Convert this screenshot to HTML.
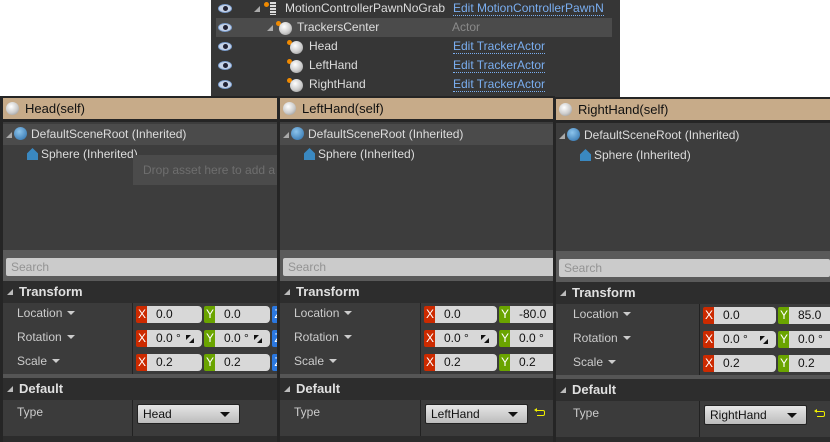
<!DOCTYPE html>
<html><head><meta charset="utf-8"><style>
*{box-sizing:border-box;margin:0;padding:0}
body{width:830px;height:442px;overflow:hidden;background:#fff;position:relative;font-family:"Liberation Sans",sans-serif;font-size:12px;color:#ddd}
.abs{position:absolute}
.top{left:211px;top:0;width:409px;height:97px;background:#363636}
.trow{position:absolute;left:5px;width:396px;height:19px;line-height:19px}
.eye{position:absolute;left:2px;top:5px;width:14px;height:9px;border-radius:50%;background:#c8d4e8;border:1px solid #7ea0d0}
.eye:after{content:"";position:absolute;left:4px;top:1px;width:5px;height:5px;border-radius:50%;background:#223}
.ball{position:absolute;width:13px;height:13px;border-radius:50%;background:radial-gradient(circle at 40% 35%,#fff,#ccc 55%,#888)}
.dot{position:absolute;width:5px;height:5px;border-radius:50%;background:#f08a00}
.link{position:absolute;left:242px;color:#7aaef0;border-bottom:1px dotted #7aaef0;line-height:14px;top:2px}
.panel{position:absolute;background:#252525;overflow:hidden}
.hdr{position:absolute;left:3px;right:0;top:2px;height:21px;background:#c7ab89;color:#111;font-size:13px;line-height:21px;padding-left:22px}
.hdr .ball{left:3px;top:4px}
.tree{position:absolute;left:3px;right:0;top:26px;height:128px;background:#3d3d3d}
.sel{position:absolute;left:0;right:0;top:2px;height:21px;background:#4b4b4b;line-height:21px;padding-left:28px}
.sph{position:absolute;top:22px;left:38px;line-height:20px}
.tri{position:absolute;width:0;height:0;border-left:6px solid transparent;border-bottom:6px solid #aaa}
.sstrip{position:absolute;left:3px;right:0;top:154px;height:31px;background:#5a5a5a}
.sbox{position:absolute;left:3px;right:0;top:8px;height:18px;background:#cbcbcb;border-radius:2px;color:#939393;line-height:18px;padding-left:5px}
.sh{position:absolute;left:3px;right:0;height:22px;background:#2d2d2d;font-weight:bold;font-size:13px;line-height:22px;padding-left:16px;color:#e0e0e0}
.sh .tri{left:4px;top:8px;border-bottom-color:#bbb}
.body{position:absolute;left:3px;right:0;background:#3b3b3b}
.lbl{position:absolute;color:#ccc;line-height:17px}
.lbl i{display:inline-block;width:0;height:0;border-left:4px solid transparent;border-right:4px solid transparent;border-top:4px solid #ccc;margin-left:5px;vertical-align:2px}
.vd{position:absolute;width:1px;background:#222}
.f{position:absolute;height:17px;width:66px}
.f b{position:absolute;left:0;top:0;width:12px;height:17px;color:#fff;font-weight:normal;line-height:17px;text-align:center;border-radius:2px 0 0 2px}
.f span{position:absolute;left:11px;top:0;right:0;height:17px;background:#d8d8d8;border-radius:0 4px 4px 0;color:#111;line-height:17px;padding-left:9px}
.rx{background:#cc2a00}.gy{background:#6aa400}.bz{background:#2b78e0}
.sp{position:absolute;right:8px;top:5px;width:8px;height:8px}
.sp:before{content:"";position:absolute;left:0;top:0;border-top:5px solid #111;border-right:5px solid transparent}
.sp:after{content:"";position:absolute;right:0;bottom:0;border-bottom:5px solid #111;border-left:5px solid transparent}
.dd{position:absolute;height:20px;width:103px;background:linear-gradient(#e6e6e6,#bcbcbc);border:1px solid #222;border-radius:2px;color:#111;line-height:18px;padding-left:5px}
.dd:after{content:"";position:absolute;right:9px;top:7px;border-left:5px solid transparent;border-right:5px solid transparent;border-top:5px solid #111}
.rst{position:absolute;width:8px;height:6px;border:1.5px solid #ee0;border-left:none;border-radius:0 2px 2px 0}
.rst:before{content:"";position:absolute;left:-3px;top:-3px;border-right:3px solid #ee0;border-top:2px solid transparent;border-bottom:2px solid transparent}
.btm{position:absolute;left:3px;right:0;height:6px;background:#2c2c2c}
</style></head><body>

<div class="abs top">
  <div class="trow" style="top:-1px"><div class="eye"></div><div class="tri" style="left:38px;top:7px"></div>
    <div class="dot" style="left:48px;top:3px"></div><div class="abs" style="left:54px;top:3px;width:6px;height:13px;background:repeating-linear-gradient(#ddd 0 2px,#444 2px 3px)"></div>
    <span class="abs" style="left:69px">MotionControllerPawnNoGrab</span><span class="link" style="left:237px">Edit MotionControllerPawnN</span></div>
  <div class="trow" style="top:18px;background:#4b4b4b"><div class="eye"></div><div class="tri" style="left:51px;top:7px"></div>
    <div class="dot" style="left:60px;top:3px"></div><div class="ball" style="left:63px;top:4px"></div>
    <span class="abs" style="left:81px">TrackersCenter</span><span class="abs" style="left:236px;color:#8a8a8a">Actor</span></div>
  <div class="trow" style="top:37px"><div class="eye"></div><div class="dot" style="left:71px;top:3px"></div><div class="ball" style="left:74px;top:4px"></div>
    <span class="abs" style="left:93px">Head</span><span class="link" style="left:237px">Edit TrackerActor</span></div>
  <div class="trow" style="top:56px"><div class="eye"></div><div class="dot" style="left:71px;top:3px"></div><div class="ball" style="left:74px;top:4px"></div>
    <span class="abs" style="left:93px">LeftHand</span><span class="link" style="left:237px">Edit TrackerActor</span></div>
  <div class="trow" style="top:75px"><div class="eye"></div><div class="dot" style="left:71px;top:3px"></div><div class="ball" style="left:74px;top:4px"></div>
    <span class="abs" style="left:93px">RightHand</span><span class="link" style="left:237px">Edit TrackerActor</span></div>
</div>

<!-- PANEL 1 -->
<div class="panel" style="left:0;top:96px;width:278px;height:346px">
  <div class="hdr"><div class="ball"></div>Head(self)</div>
  <div class="tree">
    <div class="sel"><div class="tri" style="left:3px;top:8px"></div><div class="ball" style="left:11px;top:3px;width:13px;height:13px;background:radial-gradient(circle at 40% 35%,#8cc4ec,#2a6ca8)"></div>DefaultSceneRoot (Inherited)</div>
    <div class="sph"><div class="abs" style="left:-14px;top:4px;width:11px;height:12px;background:#3a88c0;clip-path:polygon(50% 0,100% 45%,100% 100%,0 100%,0 45%)"></div>Sphere (Inherited)</div>
    <div class="abs" style="left:130px;top:33px;width:150px;height:30px;background:#4b4b4b;color:#6e6e6e;line-height:30px;padding-left:10px;white-space:nowrap">Drop asset here to add a co</div>
  </div>
  <div class="sstrip"><div class="sbox">Search</div></div>
  <div class="sh" style="top:185px"><div class="tri"></div>Transform</div>
  <div class="body" style="top:207px;height:71px">
    <div class="vd" style="left:129px;top:0;height:71px"></div>
    <div class="lbl" style="left:14px;top:2px">Location<i></i></div>
    <div class="lbl" style="left:14px;top:26px">Rotation<i></i></div>
    <div class="lbl" style="left:14px;top:50px">Scale<i></i></div>
    <div class="f" style="left:133px;top:3px"><b class="rx">X</b><span>0.0</span></div>
    <div class="f" style="left:201px;top:3px"><b class="gy">Y</b><span>0.0</span></div>
    <div class="f" style="left:269px;top:3px"><b class="bz">Z</b><span></span></div>
    <div class="f" style="left:133px;top:27px"><b class="rx">X</b><span>0.0 °<i class="sp"></i></span></div>
    <div class="f" style="left:201px;top:27px"><b class="gy">Y</b><span>0.0 °<i class="sp"></i></span></div>
    <div class="f" style="left:269px;top:27px"><b class="bz">Z</b><span></span></div>
    <div class="f" style="left:133px;top:51px"><b class="rx">X</b><span>0.2</span></div>
    <div class="f" style="left:201px;top:51px"><b class="gy">Y</b><span>0.2</span></div>
    <div class="f" style="left:269px;top:51px"><b class="bz">Z</b><span></span></div>
  </div>
  <div class="abs" style="left:3px;right:0;top:278px;height:4px;background:#555"></div>
  <div class="sh" style="top:282px"><div class="tri"></div>Default</div>
  <div class="body" style="top:304px;height:36px">
    <div class="vd" style="left:129px;top:0;height:36px"></div>
    <div class="lbl" style="left:14px;top:4px">Type</div>
    <div class="dd" style="left:134px;top:4px">Head</div>
  </div>
  <div class="btm" style="top:340px"></div>
</div>

<!-- PANEL 2 -->
<div class="panel" style="left:277px;top:96px;width:278px;height:346px">
  <div class="hdr"><div class="ball"></div>LeftHand(self)</div>
  <div class="tree">
    <div class="sel"><div class="tri" style="left:3px;top:8px"></div><div class="ball" style="left:11px;top:3px;background:radial-gradient(circle at 40% 35%,#8cc4ec,#2a6ca8)"></div>DefaultSceneRoot (Inherited)</div>
    <div class="sph"><div class="abs" style="left:-14px;top:4px;width:11px;height:12px;background:#3a88c0;clip-path:polygon(50% 0,100% 45%,100% 100%,0 100%,0 45%)"></div>Sphere (Inherited)</div>
  </div>
  <div class="sstrip"><div class="sbox">Search</div></div>
  <div class="sh" style="top:185px"><div class="tri"></div>Transform</div>
  <div class="body" style="top:207px;height:71px">
    <div class="vd" style="left:140px;top:0;height:71px"></div>
    <div class="lbl" style="left:14px;top:2px">Location<i></i></div>
    <div class="lbl" style="left:14px;top:26px">Rotation<i></i></div>
    <div class="lbl" style="left:14px;top:50px">Scale<i></i></div>
    <div class="f" style="left:144px;top:3px;width:73px"><b class="rx">X</b><span>0.0</span></div>
    <div class="f" style="left:219px;top:3px;width:73px"><b class="gy">Y</b><span>-80.0</span></div>
    <div class="f" style="left:144px;top:27px;width:73px"><b class="rx">X</b><span>0.0 °<i class="sp"></i></span></div>
    <div class="f" style="left:219px;top:27px;width:73px"><b class="gy">Y</b><span>0.0 °</span></div>
    <div class="f" style="left:144px;top:51px;width:73px"><b class="rx">X</b><span>0.2</span></div>
    <div class="f" style="left:219px;top:51px;width:73px"><b class="gy">Y</b><span>0.2</span></div>
  </div>
  <div class="abs" style="left:3px;right:0;top:278px;height:4px;background:#555"></div>
  <div class="sh" style="top:282px"><div class="tri"></div>Default</div>
  <div class="body" style="top:304px;height:36px">
    <div class="vd" style="left:140px;top:0;height:36px"></div>
    <div class="lbl" style="left:14px;top:4px">Type</div>
    <div class="dd" style="left:145px;top:4px">LeftHand</div>
    <div class="rst" style="left:257px;top:10px"></div>
  </div>
  <div class="btm" style="top:340px"></div>
</div>

<!-- PANEL 3 -->
<div class="panel" style="left:553px;top:97px;width:277px;height:345px">
  <div class="hdr"><div class="ball"></div>RightHand(self)</div>
  <div class="tree">
    <div class="sel" style="background:#3d3d3d"><div class="tri" style="left:3px;top:8px"></div><div class="ball" style="left:11px;top:3px;background:radial-gradient(circle at 40% 35%,#8cc4ec,#2a6ca8)"></div>DefaultSceneRoot (Inherited)</div>
    <div class="sph"><div class="abs" style="left:-14px;top:4px;width:11px;height:12px;background:#3a88c0;clip-path:polygon(50% 0,100% 45%,100% 100%,0 100%,0 45%)"></div>Sphere (Inherited)</div>
  </div>
  <div class="sstrip"><div class="sbox">Search</div></div>
  <div class="sh" style="top:185px"><div class="tri"></div>Transform</div>
  <div class="body" style="top:207px;height:71px">
    <div class="vd" style="left:143px;top:0;height:71px"></div>
    <div class="lbl" style="left:17px;top:2px">Location<i></i></div>
    <div class="lbl" style="left:17px;top:26px">Rotation<i></i></div>
    <div class="lbl" style="left:17px;top:50px">Scale<i></i></div>
    <div class="f" style="left:147px;top:3px;width:73px"><b class="rx">X</b><span>0.0</span></div>
    <div class="f" style="left:222px;top:3px;width:73px"><b class="gy">Y</b><span>85.0</span></div>
    <div class="f" style="left:147px;top:27px;width:73px"><b class="rx">X</b><span>0.0 °<i class="sp"></i></span></div>
    <div class="f" style="left:222px;top:27px;width:73px"><b class="gy">Y</b><span>0.0 °</span></div>
    <div class="f" style="left:147px;top:51px;width:73px"><b class="rx">X</b><span>0.2</span></div>
    <div class="f" style="left:222px;top:51px;width:73px"><b class="gy">Y</b><span>0.2</span></div>
  </div>
  <div class="abs" style="left:3px;right:0;top:278px;height:4px;background:#555"></div>
  <div class="sh" style="top:282px"><div class="tri"></div>Default</div>
  <div class="body" style="top:304px;height:36px">
    <div class="vd" style="left:143px;top:0;height:36px"></div>
    <div class="lbl" style="left:17px;top:4px">Type</div>
    <div class="dd" style="left:148px;top:4px">RightHand</div>
    <div class="rst" style="left:261px;top:10px"></div>
  </div>
  <div class="btm" style="top:340px"></div>
</div>
</body></html>
